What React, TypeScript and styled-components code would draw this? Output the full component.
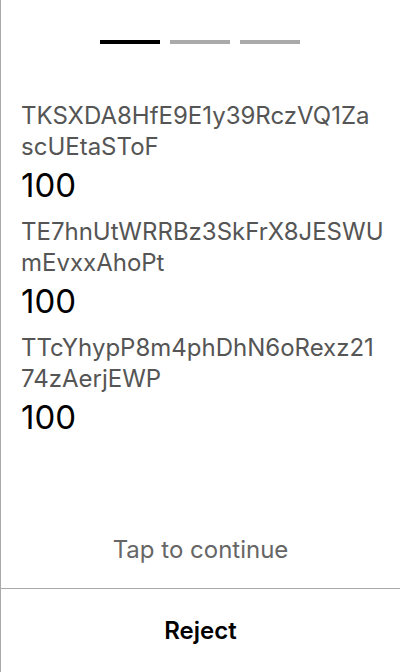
import React from "react";
import styled, { createGlobalStyle } from "styled-components";

interface Recipient {
  address: string;
  amount: string;
}

const recipients: Recipient[] = [
  { address: "TKSXDA8HfE9E1y39RczVQ1ZascUEtaSToF", amount: "100" },
  { address: "TE7hnUtWRRBz3SkFrX8JESWUmEvxxAhoPt", amount: "100" },
  { address: "TTcYhypP8m4phDhN6oRexz2174zAerjEWP", amount: "100" },
];

// addresses wrap after 24 characters
const chunk = (s: string, n = 24) => {
  const out: string[] = [];
  for (let i = 0; i < s.length; i += n) out.push(s.slice(i, i + n));
  return out;
};

const App: React.FC = () => {
  return (
    <>
      <GlobalStyle />
      <Screen>
        <Steps>
          <Step active />
          <Step />
          <Step />
        </Steps>
        <List>
          {recipients.map((r) => (
            <Entry key={r.address}>
              <Address>
                {chunk(r.address).map((part) => (
                  <AddressLine key={part}>{part}</AddressLine>
                ))}
              </Address>
              <Amount>{r.amount}</Amount>
            </Entry>
          ))}
        </List>
        <Hint>Tap to continue</Hint>
        <Footer>
          <RejectButton>Reject</RejectButton>
        </Footer>
      </Screen>
    </>
  );
};

export default App;

const GlobalStyle = createGlobalStyle`
  html, body {
    margin: 0;
    padding: 0;
    background: #ffffff;
  }
  body {
    font-family: Inter, "Noto Sans", sans-serif;
  }
`;

const Screen = styled.div`
  height: 672px;
  box-sizing: border-box;
  border-left: 1px solid #aaaaaa;
  display: flex;
  flex-direction: column;
  background: #ffffff;
  overflow: hidden;
`;

const Steps = styled.div`
  display: flex;
  justify-content: center;
  gap: 10px;
  padding-top: 40px;
  margin-left: -1px;
`;

const Step = styled.div<{ active?: boolean }>`
  width: 60px;
  height: 4px;
  background: ${(p) => (p.active ? "#000000" : "#aaaaaa")};
`;

const List = styled.div`
  flex: 1;
  padding: 56px 20px 0 20px;
`;

const Entry = styled.div`
  margin-bottom: 7px;
`;

const Address = styled.div`
  font-size: 24px;
  line-height: 31px;
  color: #555555;
`;

const AddressLine = styled.div`
  white-space: nowrap;
`;

const Amount = styled.div`
  font-size: 33px;
  line-height: 47px;
  color: #000000;
`;

const Hint = styled.div`
  text-align: center;
  font-size: 24px;
  line-height: 30px;
  color: #666666;
  margin-bottom: 23px;
`;

const Footer = styled.div`
  border-top: 1px solid #aaaaaa;
  height: 83px;
  display: flex;
  align-items: center;
  justify-content: center;
`;

const RejectButton = styled.button`
  border: none;
  background: none;
  font-family: Inter, "Noto Sans", sans-serif;
  font-size: 24px;
  font-weight: 600;
  color: #000000;
  padding: 0;
`;
